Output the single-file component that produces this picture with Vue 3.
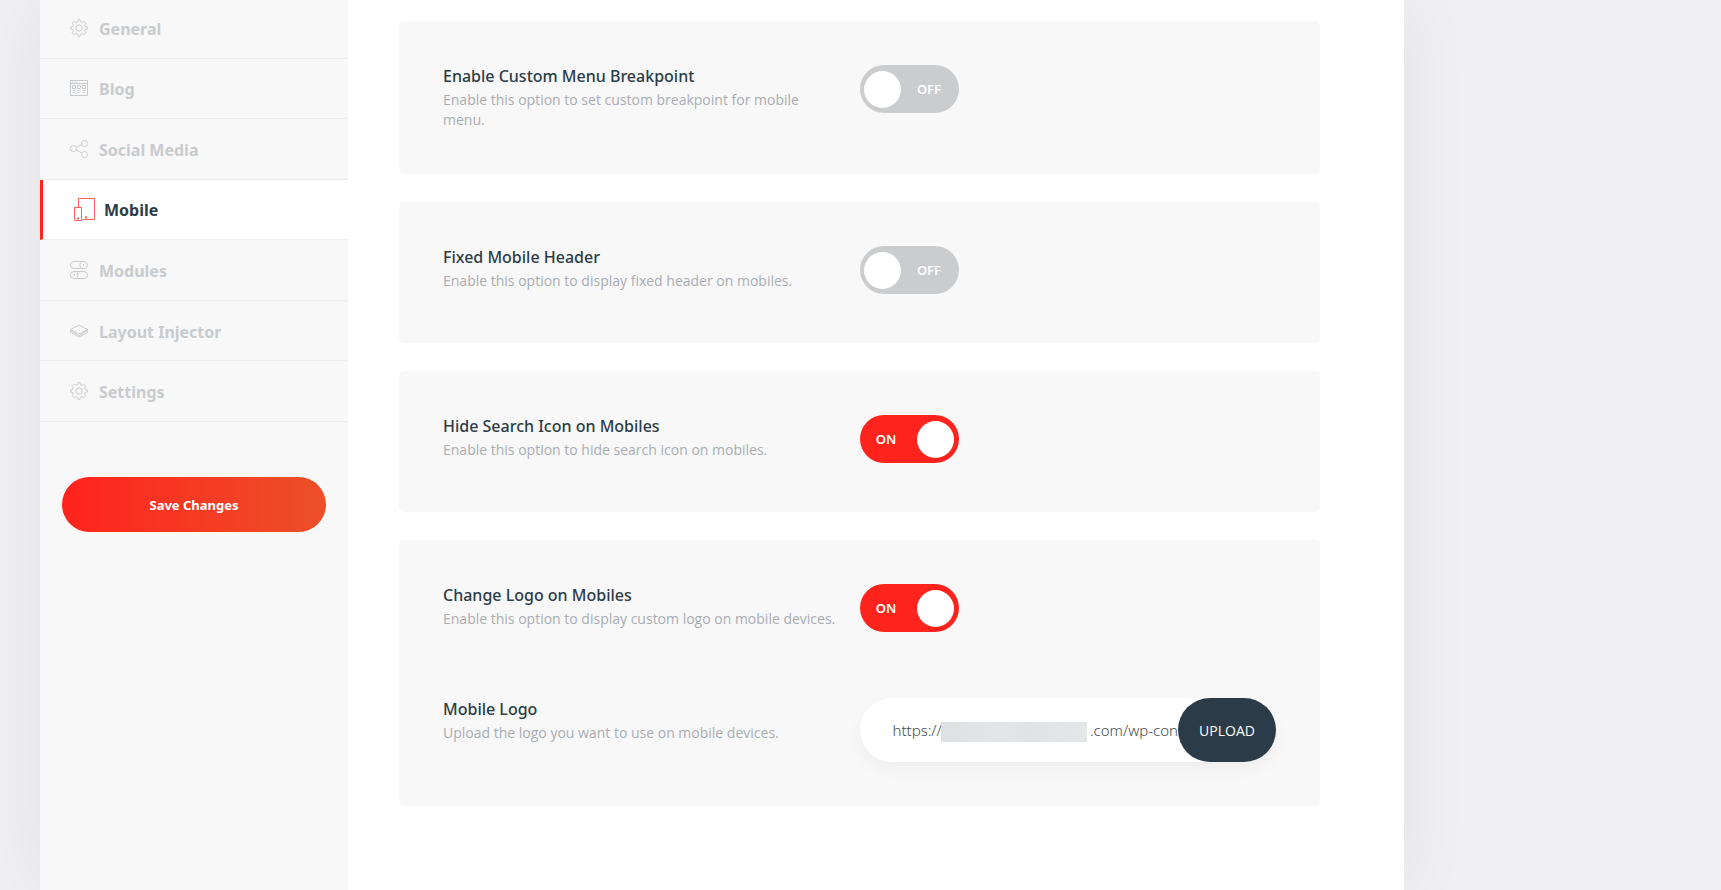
<script setup>
import { ref } from 'vue'

const sections = [
  { name: 'General', icon: 'gear' },
  { name: 'Blog', icon: 'blog' },
  { name: 'Social Media', icon: 'share' },
  { name: 'Mobile', icon: 'mobile' },
  { name: 'Modules', icon: 'modules' },
  { name: 'Layout Injector', icon: 'layers' },
  { name: 'Settings', icon: 'gear' }
]
const active = ref('Mobile')

const cards = ref([
  [{ id: 'breakpoint', title: 'Enable Custom Menu Breakpoint', text: 'Enable this option to set custom breakpoint for mobile menu.', on: false }],
  [{ id: 'fixed-header', title: 'Fixed Mobile Header', text: 'Enable this option to display fixed header on mobiles.', on: false }],
  [{ id: 'hide-search', title: 'Hide Search Icon on Mobiles', text: 'Enable this option to hide search icon on mobiles.', on: true }],
  [
    { id: 'change-logo', title: 'Change Logo on Mobiles', text: 'Enable this option to display custom logo on mobile devices.', on: true },
    { id: 'mobile-logo', title: 'Mobile Logo', text: 'Upload the logo you want to use on mobile devices.', upload: true }
  ]
])

// The host name is left blank; the mask lies over the gap.
const logoUrl = ref('https://' + '\u00a0'.repeat(38) + '.com/wp-con')
</script>

<template>
  <div class="page">
    <div class="panel">
      <aside class="sidebar">
        <nav class="nav">
          <a
            v-for="s in sections"
            :key="s.name"
            href="#"
            class="nav-item"
            :class="{ active: active === s.name }"
            @click.prevent="active = s.name"
          >
            <svg v-if="s.icon === 'gear'" class="icon" viewBox="0 0 18 18" aria-hidden="true">
              <path d="M7.6 2.6 8 .6h2l.4 2 1.6.7L13.700 2.200 15.800 4.300 14.700 6l.7 1.600 2 .4v2l-2 .4-.7 1.600 1.100 1.700-2.100 2.100L12 14.700l-1.600.7-.4 2H8l-.4-2L6 14.700l-1.700 1.100-2.100-2.100L3.300 12l-.7-1.600-2-.4V8l2-.4L3.300 6 2.200 4.300 4.300 2.200 6 3.300z" />
              <circle cx="9" cy="9" r="3.200" />
            </svg>
            <svg v-else-if="s.icon === 'blog'" class="icon" viewBox="0 0 18 18" aria-hidden="true">
              <path d="M.5 1.500h17v15H.5zM.5 4.500h17M2 3h1M4 3h1M6 3h1M2.500 6.500h3v3h-3zM7.500 6.500h3v3h-3zM12.500 6.500h3v3h-3zM2.500 11.500h3M7.500 11.500h3M12.500 11.500h3M2.500 13.500h2M7.500 13.500h2M12.500 13.500h2" />
            </svg>
            <svg v-else-if="s.icon === 'share'" class="icon" viewBox="0 0 18 18" aria-hidden="true">
              <circle cx="3.500" cy="8.500" r="3" />
              <circle cx="14.500" cy="3.500" r="3" />
              <circle cx="14.500" cy="14.500" r="3" />
              <path d="m6.300 7.300 5.500-2.600M6.200 9.900l5.600 3.100" />
            </svg>
            <svg v-else-if="s.icon === 'mobile'" class="icon icon-large" viewBox="0 0 24 24" aria-hidden="true">
              <path d="M6.500 10.500v-9h16v21h-12M2.500 10.500h7v13h-7z" />
              <path d="M5 21.500h2M13 20.500h2" stroke-width="2" />
            </svg>
            <svg v-else-if="s.icon === 'modules'" class="icon" viewBox="0 0 18 18" aria-hidden="true">
              <rect x=".5" y=".5" width="17" height="7" rx="3.500" />
              <rect x=".5" y="10.500" width="17" height="7" rx="3.500" />
              <path d="M11.500 7.500c-2-2-2-5 0-7M6.500 10.500c2 2 2 5 0 7M13.500 3v2M4.500 13v2" />
            </svg>
            <svg v-else class="icon" viewBox="0 0 18 18" aria-hidden="true">
              <path d="M9 3 17.500 7.500 9 12 .5 7.500z" />
              <path d="M.5 7.500v3L9 15l8.500-4.500v-3M1 9l8 4.500L17 9" />
            </svg>
            <span class="nav-name">{{ s.name }}</span>
          </a>
        </nav>
        <button type="button" class="save">Save Changes</button>
      </aside>

      <main class="content">
        <section v-for="(rows, i) in cards" :key="i" class="card">
          <div v-for="row in rows" :key="row.id" class="row">
            <div class="info">
              <label class="title" :for="row.id">{{ row.title }}</label>
              <p class="text">{{ row.text }}</p>
            </div>
            <div v-if="row.upload" class="upload">
              <input :id="row.id" v-model="logoUrl" type="text" class="url" />
              <span class="mask"></span>
              <button type="button" class="upload-button">UPLOAD</button>
            </div>
            <label v-else class="toggle" :class="{ on: row.on }">
              <input :id="row.id" v-model="row.on" type="checkbox" class="check" />
              <span class="knob"></span>
              <span class="state">{{ row.on ? 'ON' : 'OFF' }}</span>
            </label>
          </div>
        </section>
      </main>
    </div>
  </div>
</template>

<style>
body {
  margin: 0;
  background: #f0f0f2;
}
</style>

<style scoped>
.page {
  box-sizing: border-box;
  height: 100vh;
  overflow: hidden;
  padding: 0 317px 0 40px;
  font-family: "Noto Sans", "Open Sans", sans-serif;
  color: #2b3c46;
}
.panel {
  display: flex;
  min-height: 100vh;
  background: #fff;
  box-shadow: 0 0 70px rgba(20, 20, 0, 0.06);
}
.sidebar {
  flex: 0 0 308px;
  background: #f8f8f8;
}
.nav {
  display: grid;
  grid-auto-rows: 1fr;
  height: 424px;
  margin-top: -2px;
}
.nav-item {
  display: flex;
  align-items: center;
  gap: 11px;
  padding: 0 30px;
  border-bottom: 1px solid #ececed;
  color: #c8cbce;
  font-size: 16px;
  font-weight: 700;
  line-height: 24px;
  text-decoration: none;
}
.nav-item.active {
  gap: 8px;
  padding-left: 29px;
  border-left: 3px solid #ff231d;
  background: #fff;
  color: #2b3c46;
}
.nav-name {
  padding-top: 2px;
}
.icon {
  width: 18px;
  height: 18px;
  fill: none;
  stroke: currentColor;
  stroke-width: 1;
}
.icon-large {
  width: 24px;
  height: 24px;
  stroke: #ff5f5b;
}
.save {
  display: block;
  width: calc(100% - 44px);
  height: 55px;
  margin: 55px 22px 0;
  padding: 0;
  border: 0;
  border-radius: 28px;
  background: linear-gradient(90deg, #ff231d, #ec5029);
  color: #fff;
  font: 700 13px "Noto Sans", "Open Sans", sans-serif;
}
.content {
  display: flex;
  flex: 1;
  flex-direction: column;
  gap: 28px;
  padding: 21px 84px 40px 51px;
}
.card {
  display: grid;
  gap: 61px;
  padding: 44px;
  border-radius: 5px;
  background: #f8f8f8;
}
.row {
  display: grid;
  grid-template-columns: 1fr 1fr;
  align-items: start;
  min-height: 53px;
}
.info {
  padding-right: 20px;
}
.title {
  display: block;
  font-size: 16px;
  font-weight: 500;
  line-height: 22px;
}
.text {
  margin: 3px 0 0;
  color: #a9adb3;
  font-family: "Open Sans", "Noto Sans", sans-serif;
  font-size: 14px;
  line-height: 20px;
}
.toggle {
  display: flex;
  align-items: center;
  box-sizing: border-box;
  width: 99px;
  height: 48px;
  padding: 0 5px 0 4px;
  border-radius: 24px;
  background: #cbccce;
  color: #fff;
  font-size: 13px;
  font-weight: 600;
  cursor: pointer;
}
.toggle.on {
  flex-direction: row-reverse;
  background: #ff231d;
}
.check {
  width: 0;
  height: 0;
  margin: 0;
  appearance: none;
}
.knob {
  width: 37px;
  height: 37px;
  border-radius: 50%;
  background: #fff;
}
.state {
  flex: 1;
  padding-left: 4px;
  text-align: center;
}
.toggle.on .state {
  padding: 0 8px 0 0;
}
.upload {
  position: relative;
  display: flex;
  height: 64px;
  border-radius: 32px;
  background: #fff;
  box-shadow: 0 8px 16px rgba(0, 0, 0, 0.04);
}
.url {
  flex: 1;
  min-width: 0;
  padding: 0 0 0 33px;
  border: 0;
  outline: 0;
  background: transparent;
  color: #444b51;
  font: 300 15px "Noto Sans", "Open Sans", sans-serif;
}
.mask {
  position: absolute;
  top: 24px;
  left: 81px;
  width: 146px;
  height: 20px;
  background: linear-gradient(90deg, #dfe0e1, #e4e5e6 40%, #e1e2e3 60%, #e6e7e8);
}
.upload-button {
  flex: 0 0 98px;
  padding: 0;
  border: 0;
  border-radius: 32px;
  background: #2b3b47;
  color: #fff;
  font: 400 14px "Open Sans", "Noto Sans", sans-serif;
}
</style>
